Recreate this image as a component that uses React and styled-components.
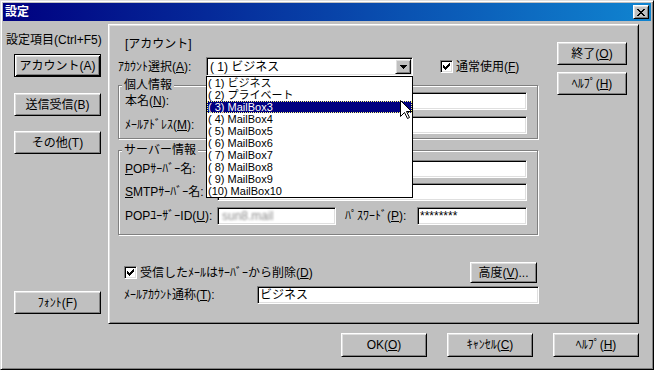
import React from "react";
import styled, { createGlobalStyle, css } from "styled-components";

const GlobalStyle = createGlobalStyle`
  html, body {
    margin: 0;
    padding: 0;
    background: #c0c0c0;
  }
  body {
    font-family: "Liberation Sans", "Noto Sans CJK JP", sans-serif;
    font-size: 12px;
    color: #000;
  }
  *, *::before, *::after {
    box-sizing: border-box;
  }
  u {
    text-underline-offset: 1px;
  }
`;

const raised = css`
  border: 1px solid;
  border-color: #fff #000 #000 #fff;
  box-shadow: inset 1px 1px #dfdfdf, inset -1px -1px #808080;
`;

const sunken = css`
  border: 1px solid;
  border-color: #808080 #fff #fff #808080;
  box-shadow: inset 1px 1px #000, inset -1px -1px #dfdfdf;
`;

const Window = styled.div`
  width: 654px;
  height: 370px;
  display: flex;
  flex-direction: column;
  padding: 2px;
  background: #c0c0c0;
  border: 1px solid;
  border-color: #dfdfdf #000 #000 #dfdfdf;
  box-shadow: inset 1px 1px #fff, inset -1px -1px #808080;
`;

const TitleBar = styled.div`
  height: 18px;
  flex-shrink: 0;
  display: flex;
  align-items: center;
  padding: 0 2px 0 2px;
  background: linear-gradient(to right, #000080, #1084d0);
`;

const Title = styled.span`
  color: #fff;
  font-weight: bold;
  line-height: 14px;
`;

const CloseButton = styled.div`
  ${raised};
  margin-left: auto;
  width: 16px;
  height: 14px;
  display: flex;
  align-items: center;
  justify-content: center;
  background: #c0c0c0;
`;

const Client = styled.div`
  flex: 1;
  display: flex;
`;

const Sidebar = styled.div`
  width: 105px;
  flex-shrink: 0;
  display: flex;
  flex-direction: column;
  align-items: flex-start;
  padding-top: 12px;
`;

const SideLabel = styled.span`
  margin-left: 3px;
  line-height: 14px;
  white-space: nowrap;
`;

const Button = styled.div`
  ${raised};
  width: ${(p) => p.$w}px;
  height: ${(p) => p.$h}px;
  flex-shrink: 0;
  display: flex;
  align-items: center;
  justify-content: center;
  background: #c0c0c0;
  line-height: 14px;
  white-space: nowrap;
  ${(p) =>
    p.$default &&
    css`
      border: 1px solid #000;
      box-shadow: inset 1px 1px #fff, inset -1px -1px #000,
        inset 2px 2px #dfdfdf, inset -2px -2px #808080;
    `}
`;

const SideButton = styled(Button)`
  margin: ${(p) => p.$mt}px 0 0 11px;
`;

const Main = styled.div`
  flex: 1;
  display: flex;
  flex-direction: column;
  padding: 3px 13px 0 0;
`;

const Panel = styled.div`
  ${raised};
  width: 531px;
  height: 300px;
  padding: 1px;
  display: flex;
`;

const Form = styled.div`
  width: 435px;
  flex-shrink: 0;
  display: flex;
  flex-direction: column;
  align-items: flex-start;
`;

const Heading = styled.div`
  margin: 11px 0 0 15px;
  line-height: 14px;
`;

const AccountRow = styled.div`
  display: flex;
  align-items: center;
  height: 19px;
  margin: 6px 0 0 8px;
`;

const Label = styled.span`
  width: ${(p) => p.$w}px;
  margin-left: ${(p) => p.$ml || 0}px;
  flex-shrink: 0;
  line-height: 14px;
  white-space: nowrap;
`;

const Combo = styled.div`
  ${sunken};
  position: relative;
  width: 207px;
  height: 19px;
  padding: 1px;
  display: flex;
  align-items: center;
  background: #fff;
`;

const ComboText = styled.span`
  padding-left: 2px;
  line-height: 14px;
  white-space: pre;
`;

const DropButton = styled.div`
  ${raised};
  margin-left: auto;
  width: 16px;
  height: 15px;
  display: flex;
  align-items: center;
  justify-content: center;
  background: #c0c0c0;
`;

const DropList = styled.div`
  position: absolute;
  top: 18px;
  left: -1px;
  z-index: 10;
  width: 207px;
  height: 122px;
  border: 1px solid #000;
  background: #fff;
`;

const ListItem = styled.div`
  height: 12px;
  line-height: 12px;
  padding-left: 1px;
  font-size: 11px;
  white-space: pre;
  ${(p) =>
    p.$active &&
    css`
      background: #000080;
      color: #fff;
      outline: 1px dotted #ffff80;
      outline-offset: -1px;
    `}
`;

const Cursor = styled.svg`
  position: absolute;
  left: 193px;
  top: 23px;
`;

const CheckWrap = styled.div`
  display: flex;
  align-items: center;
  margin-left: ${(p) => p.$ml || 0}px;
`;

const CheckBox = styled.div`
  ${sunken};
  width: 13px;
  height: 13px;
  display: flex;
  align-items: center;
  justify-content: center;
  background: #fff;
`;

const CheckText = styled.span`
  margin-left: 3px;
  line-height: 14px;
  white-space: nowrap;
`;

const Group = styled.fieldset`
  width: 420px;
  min-width: 0;
  margin: ${(p) => p.$mt}px 0 0 8px;
  padding: ${(p) => p.$pt || 0}px 0 ${(p) => p.$pb}px 6px;
  border: 1px solid #808080;
  box-shadow: 1px 1px 0 #fff, inset 1px 1px 0 #fff;
`;

const Legend = styled.legend`
  height: 14px;
  margin-left: -3px;
  padding: 0 2px;
  line-height: 14px;
  background: #c0c0c0;
`;

const Row = styled.div`
  display: flex;
  align-items: center;
  height: 18px;
  margin-top: ${(p) => p.$mt || 0}px;
`;

const Field = styled.div`
  ${sunken};
  width: ${(p) => p.$w}px;
  height: 18px;
  flex-shrink: 0;
  padding: 0 2px;
  display: flex;
  align-items: center;
  background: #fff;
  line-height: 14px;
  white-space: nowrap;
  overflow: hidden;
`;

const Blurred = styled.span`
  color: #8c8c8c;
  filter: blur(0.8px);
  padding-left: 2px;
`;

const OptionsRow = styled.div`
  width: 427px;
  height: 21px;
  display: flex;
  align-items: center;
  margin-top: 27px;
  padding-left: 14px;
`;

const NameRow = styled.div`
  height: 18px;
  display: flex;
  align-items: center;
  margin-top: 3px;
  padding-left: 14px;
`;

const PushRight = styled.div`
  margin-left: auto;
`;

const SideActions = styled.div`
  display: flex;
  flex-direction: column;
  gap: 7px;
  padding: 16px 0 0 12px;
`;

const Footer = styled.div`
  display: flex;
  justify-content: flex-end;
  gap: 20px;
  margin-top: 9px;
`;

const Pixels = ({ rows, color = "#000" }) => (
  <svg
    width={rows[0].length}
    height={rows.length}
    shapeRendering="crispEdges"
    style={{ display: "block" }}
  >
    {rows.flatMap((r, y) =>
      [...r].map((c, x) =>
        c === "X" ? (
          <rect key={`${x}-${y}`} x={x} y={y} width="1" height="1" fill={color} />
        ) : null
      )
    )}
  </svg>
);

const CLOSE = [
  "XX....XX",
  ".XX..XX.",
  "..XXXX..",
  "...XX...",
  "..XXXX..",
  ".XX..XX.",
  "XX....XX",
];

const CHECK = [
  "......X",
  ".....XX",
  "X...XXX",
  "XX.XXX.",
  "XXXXX..",
  ".XXX...",
  "..X....",
];

const ARROW = ["XXXXXXX", ".XXXXX.", "..XXX..", "...X..."];

const accounts = [
  "( 1) ビジネス",
  "( 2) プライベート",
  "( 3) MailBox3",
  "( 4) MailBox4",
  "( 5) MailBox5",
  "( 6) MailBox6",
  "( 7) MailBox7",
  "( 8) MailBox8",
  "( 9) MailBox9",
  "(10) MailBox10",
];

const Check = ({ ml, children }) => (
  <CheckWrap $ml={ml}>
    <CheckBox>
      <Pixels rows={CHECK} />
    </CheckBox>
    <CheckText>{children}</CheckText>
  </CheckWrap>
);

export default function App() {
  return (
    <>
      <GlobalStyle />
      <Window>
        <TitleBar>
          <Title>設定</Title>
          <CloseButton>
            <Pixels rows={CLOSE} />
          </CloseButton>
        </TitleBar>
        <Client>
          <Sidebar>
            <SideLabel>設定項目(Ctrl+F5)</SideLabel>
            <SideButton $w={87} $h={23} $mt={7} $default>
              アカウント(A)
            </SideButton>
            <SideButton $w={87} $h={23} $mt={16}>
              送信受信(B)
            </SideButton>
            <SideButton $w={87} $h={23} $mt={15}>
              その他(T)
            </SideButton>
            <SideButton $w={87} $h={23} $mt={137}>
              ﾌｫﾝﾄ(F)
            </SideButton>
          </Sidebar>
          <Main>
            <Panel>
              <Form>
                <Heading>[アカウント]</Heading>
                <AccountRow>
                  <Label $w={88}>
                    ｱｶｳﾝﾄ選択(<u>A</u>):
                  </Label>
                  <Combo>
                    <ComboText>( 1) ビジネス</ComboText>
                    <DropButton>
                      <Pixels rows={ARROW} />
                    </DropButton>
                    <DropList>
                      {accounts.map((a, i) => (
                        <ListItem key={a} $active={i === 2}>
                          {a}
                        </ListItem>
                      ))}
                      <Cursor width="12" height="19" viewBox="0 0 12 19">
                        <path
                          d="M0.5 0.5 L0.5 16.5 L4.5 12.5 L7.5 18.5 L9.5 17.5 L6.5 11.5 L11.5 11.5 Z"
                          fill="#fff"
                          stroke="#000"
                          strokeWidth="1"
                        />
                      </Cursor>
                    </DropList>
                  </Combo>
                  <Check ml={27}>
                    通常使用(<u>F</u>)
                  </Check>
                </AccountRow>

                <Group $mt={2} $pb={4}>
                  <Legend>個人情報</Legend>
                  <Row>
                    <Label $w={92}>
                      本名(<u>N</u>):
                    </Label>
                    <Field $w={310} />
                  </Row>
                  <Row $mt={6}>
                    <Label $w={92}>
                      ﾒｰﾙｱﾄﾞﾚｽ(<u>M</u>):
                    </Label>
                    <Field $w={310} />
                  </Row>
                </Group>

                <Group $mt={4} $pt={3} $pb={9}>
                  <Legend>サーバー情報</Legend>
                  <Row>
                    <Label $w={92}>
                      <u>P</u>OPｻｰﾊﾞｰ名:
                    </Label>
                    <Field $w={310} />
                  </Row>
                  <Row $mt={5}>
                    <Label $w={92}>
                      <u>S</u>MTPｻｰﾊﾞｰ名:
                    </Label>
                    <Field $w={310} />
                  </Row>
                  <Row $mt={6}>
                    <Label $w={92}>
                      POPﾕｰｻﾞｰID(<u>U</u>):
                    </Label>
                    <Field $w={119}>
                      <Blurred>sun8.mail</Blurred>
                    </Field>
                    <Label $w={72} $ml={9}>
                      ﾊﾟｽﾜｰﾄﾞ(<u>P</u>):
                    </Label>
                    <Field $w={110}>********</Field>
                  </Row>
                </Group>

                <OptionsRow>
                  <Check>
                    受信したﾒｰﾙはｻｰﾊﾞｰから削除(<u>D</u>)
                  </Check>
                  <PushRight>
                    <Button $w={67} $h={21}>
                      高度(<u>V</u>)...
                    </Button>
                  </PushRight>
                </OptionsRow>

                <NameRow>
                  <Label $w={133}>
                    ﾒｰﾙｱｶｳﾝﾄ通称(<u>T</u>):
                  </Label>
                  <Field $w={282}>ビジネス</Field>
                </NameRow>
              </Form>

              <SideActions>
                <Button $w={70} $h={23}>
                  終了(<u>O</u>)
                </Button>
                <Button $w={70} $h={23}>
                  ﾍﾙﾌﾟ(<u>H</u>)
                </Button>
              </SideActions>
            </Panel>

            <Footer>
              <Button $w={86} $h={24}>
                OK(<u>O</u>)
              </Button>
              <Button $w={86} $h={24}>
                ｷｬﾝｾﾙ(<u>C</u>)
              </Button>
              <Button $w={86} $h={24}>
                ﾍﾙﾌﾟ(<u>H</u>)
              </Button>
            </Footer>
          </Main>
        </Client>
      </Window>
    </>
  );
}
